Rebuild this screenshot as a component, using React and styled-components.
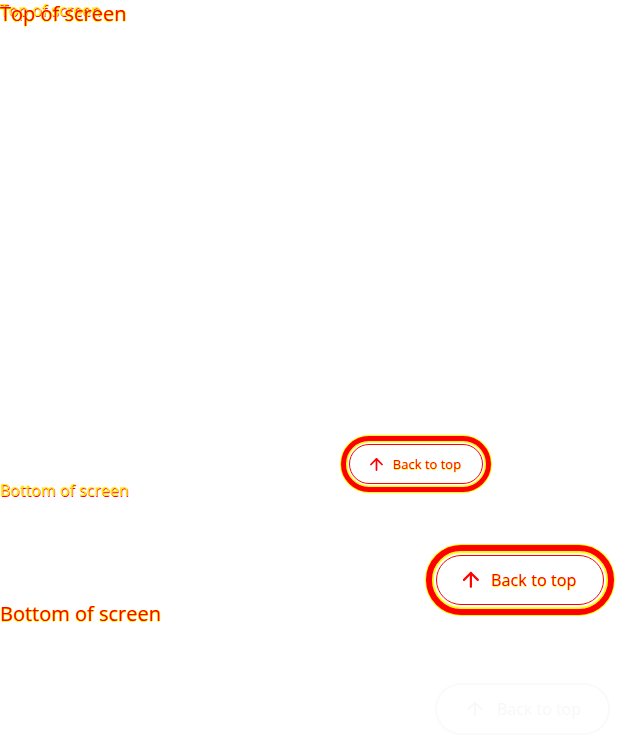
import styled, { createGlobalStyle } from 'styled-components';
import { ArrowUp } from 'lucide-react';

const GlobalStyle = createGlobalStyle`
html, body {
  margin: 0;
  padding: 0;
  background: #ffffff;
  font-family: "Open Sans", "Noto Sans", sans-serif;
}
`

const Stage = styled.div`
display: grid;
width: 625px;
height: 750px;
overflow: hidden;
`
const Screen = styled.div`
grid-area: 1 / 1;
position: relative;
display: flex;
flex-direction: column;
justify-content: space-between;
width: ${props => 500 * props.scale}px;
height: ${props => 502 * props.scale}px;
`
const Label = styled.div`
font-size: ${props => 16 * props.scale}px;
line-height: 1.36;
color: ${props => props.scale > 1 ? '#ff0000' : '#ffee00'};
text-shadow: ${props => props.scale > 1
  ? '1px 0 0 #ffff00, 0 1px 0 #ffff00'
  : '0.5px 0.5px 0 #ff0000'};
`
const Pill = styled.button`
position: absolute;
right: ${props => 9 * props.scale}px;
bottom: ${props => 10 * props.scale}px;
box-sizing: border-box;
width: ${props => 150 * props.scale}px;
height: ${props => 56 * props.scale}px;
padding: ${props => 3 * props.scale}px;
border: ${props => 5 * props.scale}px solid #ff0000;
border-radius: 999px;
background: #ffffff;
box-shadow: inset 0 0 0 ${props => 1.5 * props.scale}px #ffff00, 0 0 0 1px #ffff00;
cursor: pointer;
font-family: inherit;
`
const PillInner = styled.span`
display: flex;
align-items: center;
justify-content: center;
gap: ${props => 7 * props.scale}px;
box-sizing: border-box;
height: 100%;
padding-right: ${props => 4 * props.scale}px;
border: 1px solid #ff0000;
border-radius: 999px;
color: #ff0000;
font-size: ${props => 13 * props.scale}px;
text-shadow: 0.5px 0.5px 0 #ffff00;
`
const Ghost = styled.button`
position: fixed;
right: 15px;
bottom: 15px;
display: flex;
align-items: center;
justify-content: center;
gap: 11px;
width: 175px;
height: 52px;
border: 2px solid #fafafa;
border-radius: 999px;
background: #ffffff;
color: #f8f8f8;
font-family: inherit;
font-size: 16px;
`

function BackToTop({ scale }) {
  return (
    <Pill scale={scale}>
      <PillInner scale={scale}>
        <ArrowUp size={19 * scale} strokeWidth={2.2} />
        Back to top
      </PillInner>
    </Pill>
  )
}

function ScreenLayer({ scale }) {
  return (
    <Screen scale={scale}>
      <Label scale={scale}>Top of screen</Label>
      <Label scale={scale}>Bottom of screen</Label>
      <BackToTop scale={scale} />
    </Screen>
  )
}

function App() {
  return (
    <>
      <GlobalStyle />
      <Stage>
        <ScreenLayer scale={1} />
        <ScreenLayer scale={1.25} />
      </Stage>
      <Ghost>
        <ArrowUp size={22} strokeWidth={2} />
        Back to top
      </Ghost>
    </>
  );
}

export default App;
